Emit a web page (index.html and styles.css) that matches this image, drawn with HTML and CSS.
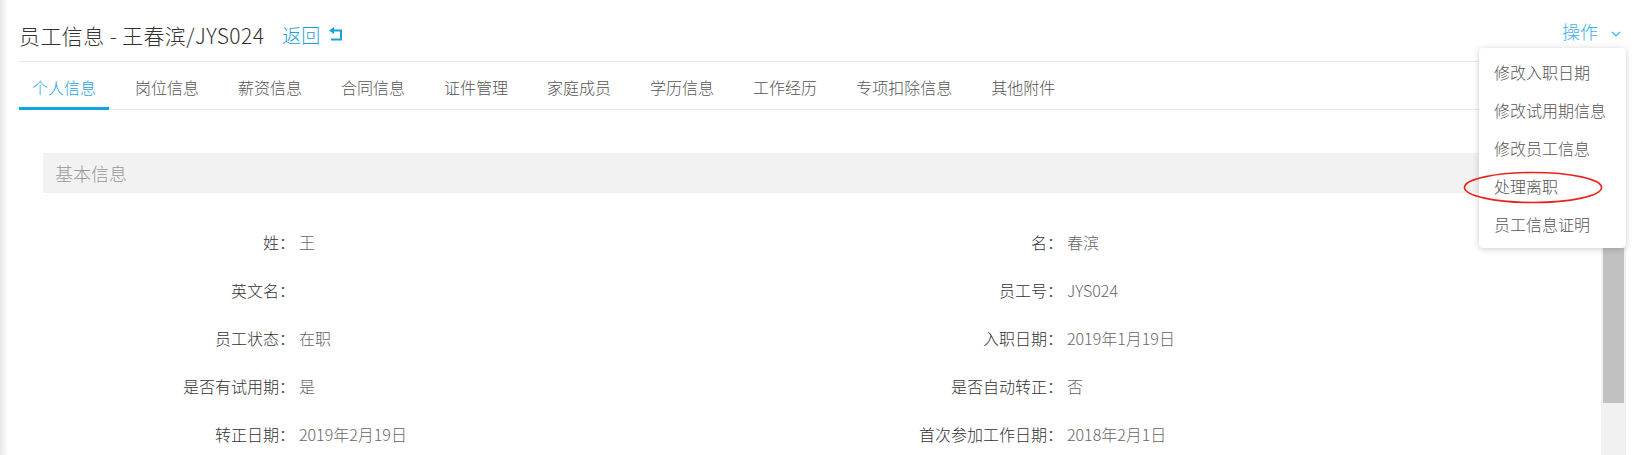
FILE: index.html
```html
<!DOCTYPE html>
<html lang="zh">
<head>
  <meta charset="UTF-8" />
  <title>员工信息</title>
  <link rel="stylesheet" href="styles.css">
</head>
<body>
  <div class="page">
    <div class="header">
      <div class="title">
        员工信息 - 王春滨/JYS024
        <a class="back">返回
          <svg width="14" height="15" viewBox="0 0 14 15"><path d="M4 3.5H12V12.5H2" fill="none" stroke="#1aa1dc" stroke-width="2"/><polygon points="0,3.5 5,0 5,7" fill="#1aa1dc"/></svg>
        </a>
      </div>
      <div class="ops">操作
        <svg class="chev" width="10" height="6" viewBox="0 0 10 6"><polyline points="1,1 5,5 9,1" fill="none" stroke="#3ab4ee" stroke-width="1.2"/></svg>
      </div>
    </div>

    <div class="tabs">
      <div class="tab active">个人信息</div>
      <div class="tab">岗位信息</div>
      <div class="tab">薪资信息</div>
      <div class="tab">合同信息</div>
      <div class="tab">证件管理</div>
      <div class="tab">家庭成员</div>
      <div class="tab">学历信息</div>
      <div class="tab">工作经历</div>
      <div class="tab">专项扣除信息</div>
      <div class="tab">其他附件</div>
    </div>

    <div class="main">
      <div class="content">
        <div class="section-title">基本信息</div>
        <div class="form">
          <div class="field"><span class="label">姓：</span><span class="value">王</span></div>
          <div class="field"><span class="label">名：</span><span class="value">春滨</span></div>
          <div class="field"><span class="label">英文名：</span><span class="value"></span></div>
          <div class="field"><span class="label">员工号：</span><span class="value">JYS024</span></div>
          <div class="field"><span class="label">员工状态：</span><span class="value">在职</span></div>
          <div class="field"><span class="label">入职日期：</span><span class="value">2019年1月19日</span></div>
          <div class="field"><span class="label">是否有试用期：</span><span class="value">是</span></div>
          <div class="field"><span class="label">是否自动转正：</span><span class="value">否</span></div>
          <div class="field"><span class="label">转正日期：</span><span class="value">2019年2月19日</span></div>
          <div class="field"><span class="label">首次参加工作日期：</span><span class="value">2018年2月1日</span></div>
        </div>
      </div>
      <div class="scrollbar"><div class="thumb"></div></div>
    </div>

    <ul class="menu">
      <li>修改入职日期</li>
      <li>修改试用期信息</li>
      <li>修改员工信息</li>
      <li>处理离职
        <svg class="mark" width="140" height="33" viewBox="0 0 140 33"><ellipse cx="70" cy="16.5" rx="68.5" ry="15" fill="none" stroke="#e8231e" stroke-width="1.6"/></svg>
      </li>
      <li>员工信息证明</li>
    </ul>
  </div>
</body>
</html>
```

FILE: styles.css
```css
body {
  margin: 0;
  height: 455px;
  overflow: hidden;
  font-family: "Noto Sans CJK SC", sans-serif;
  font-weight: 300;
  color: #333;
  background: linear-gradient(to right, #e8e8e8, #fff 8px);
}

.page {
  position: relative;
  margin: 0 10px 0 19px;
}

.header {
  height: 61px;
  border-bottom: 1px solid #e8e8e8;
  display: flex;
  justify-content: space-between;
  align-items: center;
}

.title {
  display: flex;
  align-items: center;
  font-size: 21px;
  line-height: 28px;
  letter-spacing: 0.4px;
  padding-top: 8px;
  color: #333;
}

.back {
  display: flex;
  align-items: center;
  gap: 9px;
  margin-left: 18px;
  font-size: 19px;
  letter-spacing: 0;
  color: #1aa1dc;
  cursor: pointer;
}

.ops {
  display: flex;
  align-items: center;
  gap: 13px;
  margin-right: 5px;
  font-size: 18px;
  line-height: 26px;
  color: #3ab4ee;
}

.chev {
  margin-top: 6px;
}

.tabs {
  display: flex;
  height: 47px;
  border-bottom: 1px solid #e8e8e8;
}

.tab {
  position: relative;
  padding: 3px 13px 0;
  margin-right: 13px;
  font-size: 16px;
  line-height: 44px;
  color: #555;
}

.tab.active {
  color: #19a3e0;
}

.tab.active::after {
  content: "";
  position: absolute;
  left: 0;
  right: 0;
  bottom: -1px;
  height: 3px;
  background: #0ea5e0;
}

.main {
  display: flex;
  height: 345px;
}

.content {
  flex: 1;
  padding: 43px 22px 0 24px;
}

.section-title {
  height: 40px;
  line-height: 40px;
  padding-left: 12px;
  background: #f2f2f2;
  font-size: 18px;
  color: #999;
}

.form {
  display: grid;
  grid-template-columns: 1fr 1fr;
  padding-top: 25px;
}

.field {
  display: grid;
  grid-template-columns: 252px 1fr;
  align-items: center;
  height: 48px;
  font-size: 16px;
}

.label {
  text-align: right;
  color: #333;
}

.value {
  padding-left: 4px;
  color: #666;
}

.scrollbar {
  width: 25px;
  box-sizing: border-box;
  padding: 4px 2px 0;
  background: #f1f1f1;
}

.thumb {
  height: 289px;
  background: #c1c1c1;
}

.menu {
  position: absolute;
  top: 48px;
  right: 0;
  width: 147px;
  margin: 0;
  padding: 5px 0;
  list-style: none;
  background: #fff;
  border-radius: 4px;
  box-shadow: 0 1px 6px rgba(0, 0, 0, 0.2);
}

.menu li {
  position: relative;
  height: 38px;
  line-height: 38px;
  padding-left: 15px;
  font-size: 16px;
  color: #555;
}

.mark {
  position: absolute;
  left: -16px;
  top: 4px;
}
```
